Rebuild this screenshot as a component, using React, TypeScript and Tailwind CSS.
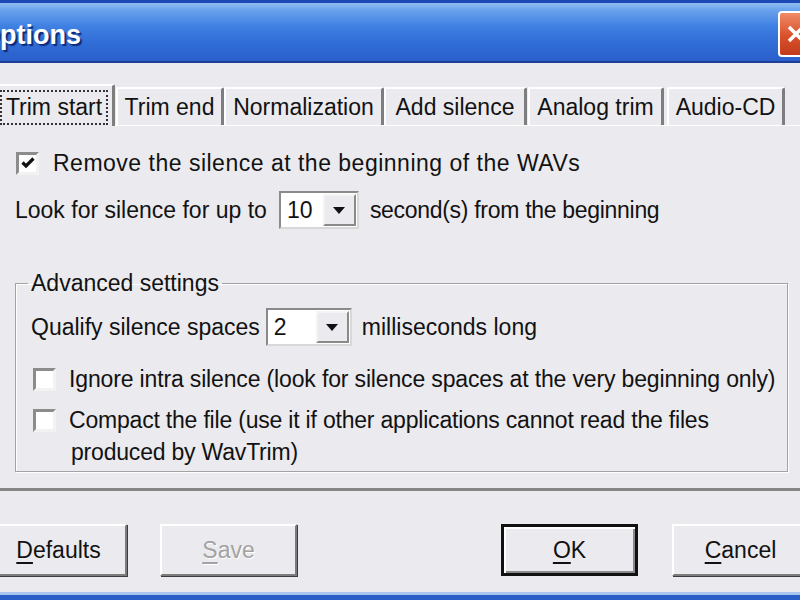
const ink = "text-[#121212]";

function CheckBox({ checked }: { checked?: boolean }) {
  return (
    <span className="flex h-[23px] w-[23px] shrink-0 items-center justify-center border-[3px] border-t-[#8c8c8c] border-l-[#8c8c8c] border-r-[#f2f2f2] border-b-[#f2f2f2] bg-white">
      {checked && (
        <svg width="14" height="12" viewBox="0 0 14 12">
          <path d="M1.5 5.5 L5 9 L12.5 1.5" fill="none" stroke="#111" strokeWidth="3.2" />
        </svg>
      )}
    </span>
  );
}

function Combo({ value, width }: { value: string; width: string }) {
  return (
    <div className={`flex h-[38px] ${width} border-2 border-t-[#8a8a8a] border-l-[#8a8a8a] border-r-[#d8d8d8] border-b-[#d8d8d8] bg-white`}>
      <span className="flex-1 pl-[6px] leading-[34px]">{value}</span>
      <span className="m-[1px] flex w-[33px] items-center justify-center border-2 border-t-[#f4f4f4] border-l-[#f4f4f4] border-r-[#8a8a8a] border-b-[#8a8a8a] bg-[#ebeaee]">
        <svg width="12" height="7" viewBox="0 0 12 7">
          <path d="M0 0 H12 L6 7 Z" fill="#111" />
        </svg>
      </span>
    </div>
  );
}

function Tab({ label, w, ml }: { label: string; w: string; ml: string }) {
  return (
    <div
      className={`${w} ${ml} flex h-[38px] items-center justify-center rounded-t-[2px] border-t-2 border-l-2 border-r-[3px] border-t-white border-l-white border-r-[#7e7e7e]`}
    >
      {label}
    </div>
  );
}

function Button({
  children,
  w,
  ml,
  isDefault,
  disabled,
}: {
  children: React.ReactNode;
  w: string;
  ml: string;
  isDefault?: boolean;
  disabled?: boolean;
}) {
  const frame = isDefault
    ? "border-[3px] border-[#111] shadow-[inset_2px_2px_0_#fff,inset_-2px_-2px_0_#8a8a8a]"
    : "border-2 border-t-white border-l-white border-r-[#7c7c7c] border-b-[#7c7c7c] shadow-[1px_1px_0_#3c3c3c]";
  return (
    <div
      className={`${w} ${ml} flex h-[52px] shrink-0 items-center justify-center ${frame} ${
        disabled ? "text-[#a3a3a3] [text-shadow:1px_1px_0_#fff]" : ""
      }`}
    >
      {children}
    </div>
  );
}

export default function App() {
  return (
    <div className={`flex h-[600px] w-[800px] flex-col overflow-hidden bg-[#ebeaee] font-['Liberation_Sans',Arial,sans-serif] text-[23px] ${ink}`}>
      {/* title bar */}
      <div className="flex h-[63px] shrink-0 items-center border-t-[3px] border-b-2 border-t-[#1b48b4] border-b-[#1d3f98] bg-[linear-gradient(to_bottom,#8fbdf2_0%,#6aa3ec_12%,#3f80e2_40%,#326fd8_65%,#2a5fcb_100%)]">
        <span className="-ml-[21px] pt-[6px] text-[27px] font-bold text-white [text-shadow:2px_2px_1px_#0d2a78]">
          Options
        </span>
        <div className="ml-auto -mr-[14px] mt-[4px] flex h-[46px] w-[36px] items-center justify-center rounded-[4px] border-2 border-white bg-[linear-gradient(to_bottom,#f08a66,#d9502b_55%,#c23c1c)]">
          <svg width="20" height="20" viewBox="0 0 20 20">
            <path d="M3 3 L17 17 M17 3 L3 17" stroke="#fff" strokeWidth="3.5" />
          </svg>
        </div>
      </div>

      {/* tabs */}
      <div className="flex h-[62px] shrink-0 items-end">
        <div className="relative z-10 -mb-px -ml-[4px] flex h-[42px] w-[119px] items-center rounded-t-[2px] border-t-2 border-r-[3px] border-t-white border-r-[#7e7e7e] bg-[#ebeaee] pl-[4px]">
          <span className="mt-[2px] flex h-[35px] w-[108px] items-center justify-center border-2 border-dotted border-[#333]">
            Trim start
          </span>
        </div>
        <Tab label="Trim end" w="w-[108px]" ml="ml-[1px]" />
        <Tab label="Normalization" w="w-[160px]" ml="ml-0" />
        <Tab label="Add silence" w="w-[143px]" ml="ml-0" />
        <Tab label="Analog trim" w="w-[136px]" ml="ml-[1px]" />
        <Tab label="Audio-CD" w="w-[118px]" ml="ml-[3px]" />
      </div>

      {/* panel */}
      <div className="-mr-[20px] flex h-[366px] shrink-0 flex-col border-t border-b-[3px] border-t-white border-b-[#858585] pl-[16px] pt-[25px]">
        <div className="flex h-[24px] items-center gap-[14px]">
          <CheckBox checked />
          <span className="tracking-[0.5px]">Remove the silence at the beginning of the WAVs</span>
        </div>
        <div className="mt-[16px] flex items-center">
          <span className="-ml-[1px]">Look for silence for up to</span>
          <div className="ml-[12px]">
            <Combo value="10" width="w-[80px]" />
          </div>
          <span className="ml-[11px] tracking-[-0.3px]">second(s) from the beginning</span>
        </div>

        <fieldset className="mt-[41px] mr-[37px] -ml-[1px] border border-[#a2a2a2] px-[12px] pb-[3px] shadow-[1px_1px_0_#fff,inset_1px_1px_0_#fff]">
          <legend className="px-[3px] leading-[26px]">Advanced settings</legend>
          <div className="mt-[12px] ml-[3px] flex items-center">
            <span>Qualify silence spaces</span>
            <div className="ml-[6px]">
              <Combo value="2" width="w-[86px]" />
            </div>
            <span className="ml-[10px]">milliseconds long</span>
          </div>
          <div className="mt-[16px] ml-[5px] flex items-center gap-[13px]">
            <CheckBox />
            <span className="whitespace-nowrap tracking-[-0.15px]">
              Ignore intra silence (look for silence spaces at the very beginning only)
            </span>
          </div>
          <div className="mt-[7px] ml-[5px] flex items-start gap-[13px]">
            <span className="mt-[5px]">
              <CheckBox />
            </span>
            <span className="leading-[32px] tracking-[-0.2px]">
              Compact the file (use it if other applications cannot read the files
              <br />
              <span className="ml-[2px]">produced by WavTrim)</span>
            </span>
          </div>
        </fieldset>
      </div>

      {/* buttons */}
      <div className="mt-[33px] -ml-[10px] flex shrink-0">
        <Button w="w-[137px]" ml="ml-0">
          <span>
            <span className="underline underline-offset-[4px]">D</span>efaults
          </span>
        </Button>
        <Button w="w-[137px]" ml="ml-[33px]" disabled>
          <span>
            <span className="underline underline-offset-[4px]">S</span>ave
          </span>
        </Button>
        <Button w="w-[137px]" ml="ml-[204px]" isDefault>
          <span>
            <span className="underline underline-offset-[4px]">O</span>K
          </span>
        </Button>
        <Button w="w-[137px]" ml="ml-[34px]">
          <span>
            <span className="underline underline-offset-[4px]">C</span>ancel
          </span>
        </Button>
      </div>

      <div className="mt-auto h-[8px] shrink-0 border-t-[3px] border-t-[#a9c6f0] bg-[#2a5dc6]" />
    </div>
  );
}
